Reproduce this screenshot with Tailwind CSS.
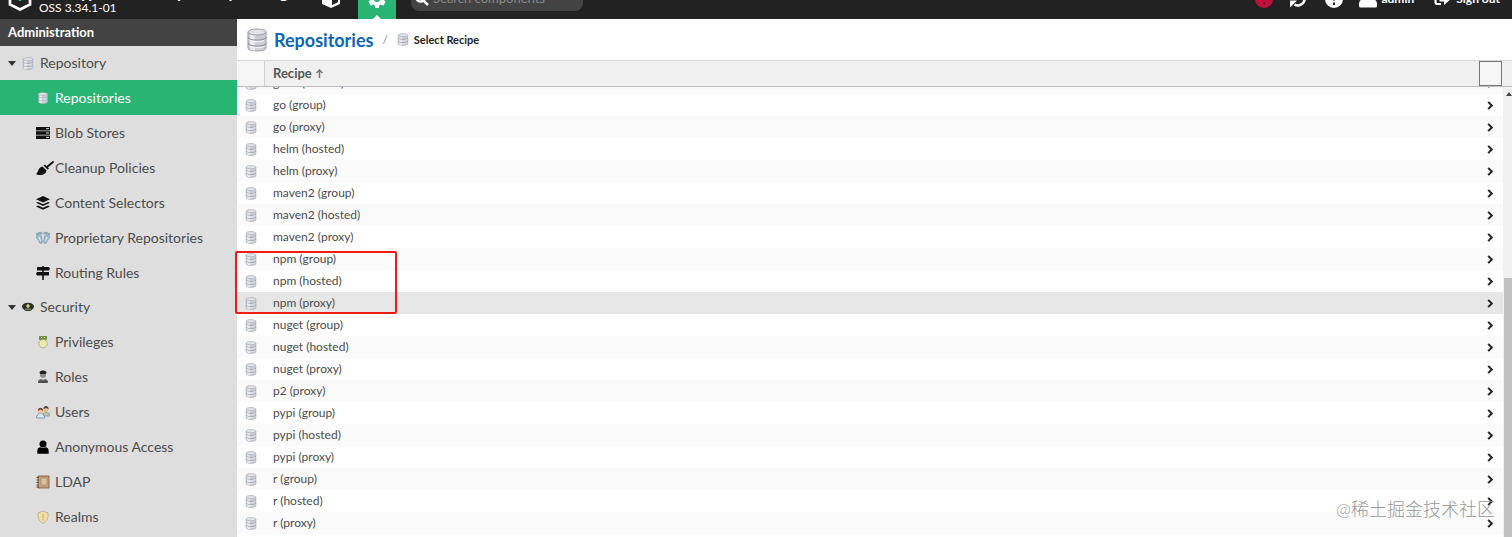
<!DOCTYPE html>
<html lang="en">

<head>
  <meta charset="UTF-8" />
  <meta name="viewport" content="width=device-width, initial-scale=1.0" />
  <title>Repositories - Select Recipe</title>
  <script src="https://cdn.jsdelivr.net/npm/@tailwindcss/browser@4"></script>
</head>

<body class="flex h-screen flex-col overflow-hidden bg-white font-['Lato','Noto_Sans_CJK_SC',sans-serif] text-[13px] text-[#4c4c4c]">

  <!-- Shared icons -->
  <svg class="hidden">
    <symbol id="db" viewBox="0 0 20 24">
      <path d="M1 4v16c0 4 18 4 18 0V4z" fill="#c9ced6" stroke="#9a9fa7" stroke-width="1" />
      <path d="M3 6v15c1 1 3 1.500 5 1.500V7z" fill="#e6eaf0" />
      <ellipse cx="10" cy="4" rx="9" ry="3" fill="#dfe4eb" stroke="#9a9fa7" />
      <path d="M1 9c0 4 18 4 18 0M1 15c0 4 18 4 18 0" fill="none" stroke="#9096a0" stroke-width="1.200" />
      <path d="M2 11.500c1 3 15 3 16 0M2 17.500c1 3 15 3 16 0" fill="none" stroke="#f3f5f8" stroke-width="1" />
    </symbol>
    <symbol id="chevron" viewBox="0 0 8 10">
      <path d="M2 1l4 4-4 4" fill="none" stroke="#222" stroke-width="2.200" />
    </symbol>
    <symbol id="user" viewBox="0 0 14 16">
      <circle cx="7" cy="4.500" r="4" />
      <path d="M0.500 15v-2.500c0-2.500 1.500-4 3.500-4.200 1.500 1.200 4.500 1.200 6 0 2 .2 3.500 1.700 3.500 4.200V15q0 .8-.8.8H1.300q-.8 0-.8-.8z" />
    </symbol>
  </svg>

  <!-- Header -->
  <header class="-mt-[21px] flex h-10 shrink-0 items-center justify-between bg-[#222222] text-white">
    <div class="flex h-full items-center">
      <div class="flex w-[321px] items-center gap-[7px] pl-2">
        <svg class="h-6 w-6" viewBox="0 0 24 24" fill="none">
          <path d="M12 1.500L22 7v10.500L12 22.500 2 17.500V7z" stroke="#fff" stroke-width="2.800" />
          <path d="M12 8v6" stroke="#28b573" stroke-width="2.500" />
        </svg>
        <div class="pt-[2px] whitespace-nowrap">
          <div class="text-base leading-4 font-bold">Sonatype Nexus Repository Manager</div>
          <div class="text-xs leading-4">OSS 3.34.1-01</div>
        </div>
      </div>
      <button class="flex h-full w-[37px] items-center" aria-label="Browse">
        <svg class="h-5 w-5" viewBox="0 0 20 20">
          <path d="M10 0l9 4v11l-9 4-9-4V4z" fill="#fff" />
          <path d="M11 9.500V16l6-2.800V7z" fill="#222" />
        </svg>
      </button>
      <button class="relative flex h-full w-[38px] items-center justify-center bg-[#28b573]" aria-label="Administration">
        <svg class="h-[18px] w-[18px]" viewBox="0 0 20 20" fill="#fff">
          <path fill-rule="evenodd" d="M8 0h4l.5 3 1.700.8L17 2.500l2.500 3.500-2 2v3l2 2L17 17.500l-2.800-1.300-1.700.8-.5 3H8l-.5-3-1.700-.8L3 17.500.5 13l2-2V8l-2-2L3 2.500l2.800 1.300L7.500 3zM10 6.500a3.500 3.500 0 1 0 0 7 3.500 3.500 0 0 0 0-7z" />
        </svg>
        <svg class="absolute bottom-0 h-1 w-2" viewBox="0 0 8 4" fill="#fff"><path d="M0 4l4-4 4 4z" /></svg>
      </button>
      <label class="ml-[15px] flex h-6 w-[172px] items-center gap-1 rounded-lg bg-[#434343] pl-1">
        <svg class="h-[14px] w-[14px] shrink-0" viewBox="0 0 14 14" fill="none" stroke="#fff" stroke-width="2.500">
          <circle cx="5.500" cy="5.500" r="4" />
          <path d="M8.500 8.500L13 13" />
        </svg>
        <input type="text" class="w-full bg-transparent text-[13px] text-white placeholder-[#8a8a8a]" placeholder="Search components" aria-label="Search components" />
      </label>
    </div>
    <div class="flex items-center pr-3 text-xs font-bold">
      <button class="mr-4" aria-label="Health">
        <svg class="h-[18px] w-[18px]" viewBox="0 0 18 18">
          <circle cx="9" cy="9" r="9" fill="#c2113f" />
          <path d="M9 3v7M9 12v2.500" stroke="#6d0a25" stroke-width="2" />
        </svg>
      </button>
      <button class="mr-[18px]" aria-label="Refresh">
        <svg class="h-[18px] w-[18px]" viewBox="0 0 18 18">
          <path d="M3 6.500A6.500 6.500 0 1 1 5.500 14.500" fill="none" stroke="#fff" stroke-width="2.600" />
          <path d="M1 10.500h7L1 17.500z" fill="#fff" />
        </svg>
      </button>
      <button class="mr-4" aria-label="Help">
        <svg class="h-[18px] w-[18px]" viewBox="0 0 18 18">
          <circle cx="9" cy="9" r="9" fill="#fff" />
          <path d="M6 6.500c0-4 6-4 6 0 0 2-3 2-3 4M9 12.500V15" fill="none" stroke="#222" stroke-width="2" />
        </svg>
      </button>
      <button class="mr-5 flex items-center gap-1">
        <svg class="h-[18px] w-[18px]" viewBox="0 0 18 18" fill="#fff">
          <circle cx="9" cy="5" r="4.500" />
          <path d="M0 16v-2c0-3 2-5 5-5h8c3 0 5 2 5 5v2q0 1.500-1.500 1.500h-15Q0 17.500 0 16z" />
        </svg>admin</button>
      <button class="flex items-center gap-1">
        <svg class="h-4 w-[18px]" viewBox="0 0 18 16">
          <path d="M7 2H3.500Q1.500 2 1.500 4v7q0 2 2 2H7" fill="none" stroke="#fff" stroke-width="2.200" />
          <path d="M5.500 5.500H10V2l7 6-7 6v-3.500H5.500z" fill="#fff" />
        </svg>Sign out</button>
    </div>
  </header>

  <div class="flex min-h-0 flex-1">

    <!-- Sidebar -->
    <nav class="flex w-[237px] shrink-0 flex-col bg-[#dedede] text-sm">
      <h2 class="flex h-[27px] shrink-0 items-center bg-[#434343] pl-2 text-[13px] font-bold text-white">Administration</h2>
      <a href="#" class="flex h-[34px] shrink-0 items-center pl-2">
        <svg class="mr-[6px] h-[5px] w-2" viewBox="0 0 8 5" fill="#333"><path d="M0 0h8L4 5z" /></svg>
        <svg class="mr-[6px] h-[13px] w-3"><use href="#db" /></svg>Repository</a>
      <a href="#" class="flex h-[35px] shrink-0 items-center bg-[#28b573] pl-9 text-white">
        <svg class="mr-[5px] h-3 w-[14px]"><use href="#db" /></svg>Repositories</a>
      <a href="#" class="flex h-[35px] shrink-0 items-center pl-9">
        <svg class="mr-[5px] h-[14px] w-[14px]" viewBox="0 0 14 14">
          <path d="M0 1h14v3.400H0zM0 5.300h14v3.400H0zM0 9.600h14V13H0z" fill="#111" />
          <path d="M10 2.700h3M10 7h3M10 11.300h3" stroke="#ddd" />
        </svg>Blob Stores</a>
      <a href="#" class="flex h-[35px] shrink-0 items-center pl-9">
        <svg class="mr-px h-[14px] w-[18px]" viewBox="0 0 18 14">
          <path d="M17 1L11 6" stroke="#111" stroke-width="1.800" stroke-linecap="round" />
          <path d="M9 3.500l4 4-1.500 1-4-4z" fill="#111" />
          <path d="M6.500 5.500l4 4c-.5 4-6 6-10.500 3.500C2.500 11 2 6.500 6.500 5.500z" fill="#111" />
        </svg>Cleanup Policies</a>
      <a href="#" class="flex h-[35px] shrink-0 items-center pl-9">
        <svg class="mr-[5px] h-[14px] w-[14px]" viewBox="0 0 14 14" fill="#111">
          <path d="M7 0l7 3.300-7 3.200L0 3.300z" />
          <path d="M0 6.800l2-.9 5 2.300 5-2.300 2 .9-7 3.300zM0 10.400l2-.9 5 2.300 5-2.300 2 .9L7 13.800z" />
        </svg>Content Selectors</a>
      <a href="#" class="flex h-[35px] shrink-0 items-center pl-9">
        <svg class="mr-[5px] h-[14px] w-[14px]" viewBox="0 0 14 14">
          <g fill="#a3bfd1" stroke="#7191a6" stroke-width=".7">
            <path d="M.5 6c0-3 5-3 5 0 0 2 1 3 .8 5-.5 2-2.500 2-3 0C3 9 .5 8 .5 6zM13.500 6c0-3-5-3-5 0 0 2-1 3-.8 5 .5 2 2.500 2 3 0 .3-2 2.800-3 2.800-5z" />
            <circle cx="1" cy="3" r=".8" /><circle cx="3" cy="2" r=".8" /><circle cx="5.300" cy="2.200" r="1" />
            <circle cx="13" cy="3" r=".8" /><circle cx="11" cy="2" r=".8" /><circle cx="8.700" cy="2.200" r="1" />
          </g>
          <path d="M3 6l1.500 4M11 6l-1.500 4" stroke="#e7eff4" />
        </svg>Proprietary Repositories</a>
      <a href="#" class="flex h-[35px] shrink-0 items-center pl-9">
        <svg class="mr-[5px] h-[14px] w-[14px]" viewBox="0 0 14 14" fill="#111">
          <path d="M6.200 0h1.600v1H13l1 1.500L13 4.500H7.800V6H13v3.500H7.800V14H6.200V9.500H1L0 7.700 1 6h5.200V4.500H1V1h5.200z" />
        </svg>Routing Rules</a>
      <a href="#" class="flex h-[34px] shrink-0 items-center pl-2">
        <svg class="mr-[6px] h-[5px] w-2" viewBox="0 0 8 5" fill="#333"><path d="M0 0h8L4 5z" /></svg>
        <svg class="mr-[6px] h-[10px] w-3" viewBox="0 0 12 10">
          <path d="M0 4C1-.5 11-.5 12 4c0 2-1 3-2 3.500-1 2-7 2-8 0C1 7 0 6 0 4z" fill="#2c2f26" />
          <path d="M3 6.500h6v1.500H3z" fill="#747a4a" />
          <path d="M6 1.500L8 4 6 6.500 4 4z" fill="#d8d27a" />
        </svg>Security</a>
      <a href="#" class="flex h-[35px] shrink-0 items-center pl-9">
        <svg class="mr-[5px] h-[14px] w-[14px]" viewBox="0 0 14 14">
          <path d="M3 1h8v4H3z" fill="#6f9345" /><path d="M5 2.500h1M8 2.500h1" stroke="#d7e5b3" />
          <circle cx="7" cy="8.700" r="4.200" fill="#efe9b4" stroke="#b0a669" stroke-width=".8" />
        </svg>Privileges</a>
      <a href="#" class="flex h-[35px] shrink-0 items-center pl-9">
        <svg class="mr-[5px] h-[14px] w-[14px]" viewBox="0 0 14 14">
          <path d="M2 13c0-3 1-4 5-4s5 1 5 4z" fill="#555" />
          <circle cx="7" cy="5" r="3" fill="#8d8d8d" />
          <path d="M3.500 2C5 0 9 0 10.500 2L10 4H4z" fill="#222" />
          <path d="M5.500 9L7 12l1.500-3z" fill="#ddd" /><path d="M7 9.500V13" stroke="#222" />
        </svg>Roles</a>
      <a href="#" class="flex h-[35px] shrink-0 items-center pl-9">
        <svg class="mr-[5px] h-[14px] w-[14px]" viewBox="0 0 14 14">
          <path d="M7 11c0-3 1-4 3-4s3.500 1 3.500 4z" fill="#b8c8b3" stroke="#6d7d69" stroke-width=".6" />
          <circle cx="10" cy="4.300" r="2.600" fill="#e3bb93" /><path d="M7.400 4c0-4 5.200-4 5.200 0L10 3z" fill="#54432f" />
          <path d="M.5 13c0-3 1.500-4.500 4-4.500s4 1.500 4 4.500z" fill="#dde9f8" stroke="#5678a8" stroke-width=".7" />
          <circle cx="4.500" cy="6" r="2.600" fill="#ecc09a" /><path d="M1.800 6c0-4.500 5.400-4.500 5.400 0L4.500 4.500z" fill="#70452a" />
        </svg>Users</a>
      <a href="#" class="flex h-[35px] shrink-0 items-center pl-9">
        <svg class="mr-[5px] h-[14px] w-[14px]" fill="#000"><use href="#user" /></svg>Anonymous Access</a>
      <a href="#" class="flex h-[35px] shrink-0 items-center pl-9">
        <svg class="mr-[5px] h-[14px] w-[14px]" viewBox="0 0 14 14">
          <path d="M2 1h11v12H2z" fill="#c3a17a" stroke="#76563a" stroke-width=".8" />
          <path d="M5 3h6v7H5z" fill="#d9c09c" stroke="#92714d" stroke-width=".5" />
          <path d="M.5 2.500H3M.5 5H3M.5 7.500H3M.5 10H3M.5 12H3" stroke="#5e4a37" />
        </svg>LDAP</a>
      <a href="#" class="flex h-[35px] shrink-0 items-center pl-9">
        <svg class="mr-[5px] h-[14px] w-[14px]" viewBox="0 0 14 14">
          <path d="M7 1l5 2c.5 5-1 8-5 10.500C3 11 1.500 8 2 3z" fill="#f0dfa8" stroke="#b9a676" stroke-width=".8" />
          <path d="M7 4v4M7 9v1.500" stroke="#c29d3f" />
        </svg>Realms</a>
    </nav>

    <!-- Content -->
    <main class="flex min-w-0 flex-1 flex-col">
      <div class="flex h-[41px] shrink-0 items-center pl-[10px]">
        <svg class="mr-[7px] h-6 w-5"><use href="#db" /></svg>
        <a href="#" class="text-lg leading-6 font-bold text-[#0c66b8]">Repositories</a>
        <span class="mx-[9px] text-xs text-[#888888]">/</span>
        <svg class="mr-[5px] h-[13px] w-3"><use href="#db" /></svg>
        <h1 class="text-[11px] leading-4 font-bold text-[#222222]">Select Recipe</h1>
      </div>
      <div class="flex h-[27px] shrink-0 items-center border-y border-t-[#d8d8d8] border-b-[#bcbcbc] bg-[#f0f0f0]">
        <div class="h-full w-7 border-r border-[#cfcfcf] bg-[#f5f5f5]"></div>
        <button class="flex flex-1 items-center gap-1 pl-2 text-[13px] font-bold text-[#555555]">Recipe
          <svg class="h-[9px] w-[7px]" viewBox="0 0 7 9" fill="none" stroke="#777" stroke-width="1.500"><path d="M3.500 9V1M.5 4l3-3 3 3" /></svg>
        </button>
        <button class="mr-[10px] h-[25px] w-[23px] border border-[#777777] bg-[#f5f5f5]" aria-label="Columns"></button>
      </div>

      <div class="relative flex min-h-0 flex-1">
        <div class="min-w-0 flex-1 overflow-hidden">
          <table class="-mt-[15px] w-full text-xs">
            <tbody id="recipes"></tbody>
          </table>
        </div>
        <!-- Scrollbar -->
        <div class="flex w-[9px] flex-col bg-[#f1f1f1]">
          <svg class="mt-[5px] ml-[3px] h-1 w-[6px]" viewBox="0 0 6 4" fill="#444"><path d="M0 4l3-4 3 4z" /></svg>
          <div class="mt-[182px] ml-px flex-1 bg-[#c1c1c1]"></div>
        </div>
        <!-- Highlight around the npm recipes -->
        <div class="absolute top-[164px] -left-[2px] h-[63px] w-[162px] rounded-xs border-2 border-[#f01c12]"></div>
        <div class="absolute right-[17px] bottom-[14px] text-lg leading-7 font-light text-[#999999]">@稀土掘金技术社区</div>
      </div>
    </main>
  </div>

  <script>
    const recipes = [
      "gitlfs (hosted)", "go (group)", "go (proxy)", "helm (hosted)", "helm (proxy)",
      "maven2 (group)", "maven2 (hosted)", "maven2 (proxy)",
      "npm (group)", "npm (hosted)", "npm (proxy)",
      "nuget (group)", "nuget (hosted)", "nuget (proxy)", "p2 (proxy)",
      "pypi (group)", "pypi (hosted)", "pypi (proxy)",
      "r (group)", "r (hosted)", "r (proxy)"
    ];
    const selected = "npm (proxy)";

    document.getElementById("recipes").innerHTML = recipes.map((name, i) => {
      const bg = name === selected ? "bg-[#e6e6e6]" : i % 2 ? "bg-white" : "bg-[#fafafa]";
      return `
        <tr class="h-[22px] ${bg}">
          <td class="w-7 pl-2"><svg class="h-[13px] w-3"><use href="#db" /></svg></td>
          <td class="pl-2">${name}</td>
          <td class="w-[17px]"><svg class="h-[9px] w-2"><use href="#chevron" /></svg></td>
        </tr>`;
    }).join("");
  </script>
</body>
</html>
